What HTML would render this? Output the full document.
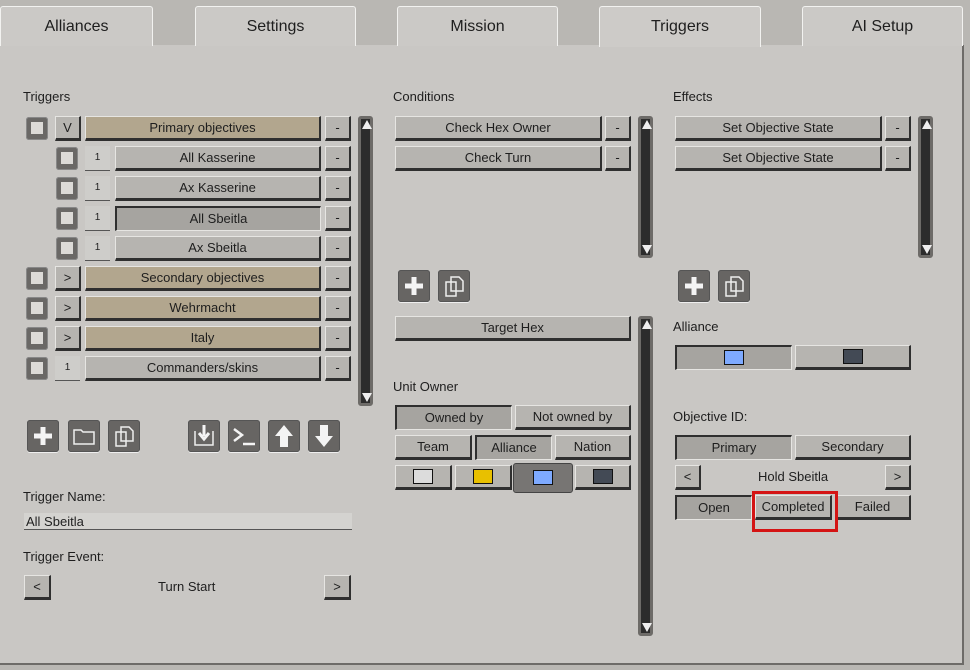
<!DOCTYPE html>
<html><head><meta charset="utf-8"><style>
*{box-sizing:border-box;margin:0;padding:0}
body{width:970px;height:670px;overflow:hidden;background:#b9b7b3;font-family:"Liberation Sans",sans-serif;font-size:13px;color:#222;position:relative}
.a{position:absolute}
.panel{position:absolute;left:0;top:45px;width:964px;height:620px;background:#c9c7c4;border-right:2px solid #6d6b68;border-bottom:2px solid #6d6b68}
.tab{position:absolute;top:6px;height:40px;background:#cbc9c6;border:1px solid #f2f2f0;border-bottom:none;border-radius:3px 3px 0 0;text-align:center;line-height:40px;font-size:16px;color:#1e1e1e}
.tab.on{background:#cdcbc8;height:41px}
.lbl{position:absolute;font-size:13px;color:#1e1e1e}
.b{position:absolute;height:25px;background:#b6b4b0;border-top:1px solid #e6e5e2;border-left:1px solid #e6e5e2;border-right:2px solid #2f2f2f;border-bottom:3px solid #2f2f2f;text-align:center;line-height:21px;font-size:13px;color:#1e1e1e}
.p{background:#a6a4a0;border-top:2px solid #2f2f2f;border-left:2px solid #2f2f2f;border-right:1px solid #e6e5e2;border-bottom:1px solid #e6e5e2;line-height:22px}
.tan{background:#b2a68e}
.one{position:absolute;height:25px;width:25px;background:#cecdca;border-bottom:1px solid #555;text-align:center;line-height:24px;font-size:10px}
.cb{position:absolute;width:22px;height:23px;background:#6a6866;border-radius:3px;box-shadow:inset 0 0 0 1px #888}
.cb::after{content:"";position:absolute;left:5px;top:5px;width:12px;height:12px;background:#dcdad7}
.sb{position:absolute;width:15px;background:#2c2c2c;border:3px solid #6d6b68;border-radius:3px}
.sb::before{content:"";position:absolute;left:1px;top:1px;border-left:5px solid transparent;border-right:5px solid transparent;border-bottom:9px solid #eee}
.sb::after{content:"";position:absolute;left:1px;bottom:1px;border-left:5px solid transparent;border-right:5px solid transparent;border-top:9px solid #eee}
.ic{position:absolute;width:32px;height:32px;background:#676563;border-radius:3px;box-shadow:inset 0 0 0 1px #555,0 1px 0 #eee}
.ic svg{position:absolute;left:0;top:0}
.sw{position:absolute;left:50%;top:50%;width:20px;height:15px;margin:-8px 0 0 -10px;border:1px solid #111}
</style></head><body>
<div class="panel"></div>
<div class="tab" style="left:0;width:153px">Alliances</div>
<div class="tab" style="left:195px;width:161px">Settings</div>
<div class="tab" style="left:397px;width:161px">Mission</div>
<div class="tab on" style="left:599px;width:162px">Triggers</div>
<div class="tab" style="left:802px;width:161px">AI Setup</div>

<div class="lbl" style="left:23px;top:89px">Triggers</div>
<div class="cb" style="left:26px;top:117px"></div><div class="b" style="left:55px;top:116px;width:26px">V</div><div class="b tan" style="left:85px;top:116px;width:236px">Primary objectives</div><div class="b" style="left:325px;top:116px;width:26px">-</div>
<div class="cb" style="left:56px;top:147px"></div><div class="one" style="left:85px;top:146px">1</div><div class="b" style="left:115px;top:146px;width:206px">All Kasserine</div><div class="b" style="left:325px;top:146px;width:26px">-</div>
<div class="cb" style="left:56px;top:177px"></div><div class="one" style="left:85px;top:176px">1</div><div class="b" style="left:115px;top:176px;width:206px">Ax Kasserine</div><div class="b" style="left:325px;top:176px;width:26px">-</div>
<div class="cb" style="left:56px;top:207px"></div><div class="one" style="left:85px;top:206px">1</div><div class="b p" style="left:115px;top:206px;width:206px">All Sbeitla</div><div class="b" style="left:325px;top:206px;width:26px">-</div>
<div class="cb" style="left:56px;top:237px"></div><div class="one" style="left:85px;top:236px">1</div><div class="b" style="left:115px;top:236px;width:206px">Ax Sbeitla</div><div class="b" style="left:325px;top:236px;width:26px">-</div>
<div class="cb" style="left:26px;top:267px"></div><div class="b" style="left:55px;top:266px;width:26px">&gt;</div><div class="b tan" style="left:85px;top:266px;width:236px">Secondary objectives</div><div class="b" style="left:325px;top:266px;width:26px">-</div>
<div class="cb" style="left:26px;top:297px"></div><div class="b" style="left:55px;top:296px;width:26px">&gt;</div><div class="b tan" style="left:85px;top:296px;width:236px">Wehrmacht</div><div class="b" style="left:325px;top:296px;width:26px">-</div>
<div class="cb" style="left:26px;top:327px"></div><div class="b" style="left:55px;top:326px;width:26px">&gt;</div><div class="b tan" style="left:85px;top:326px;width:236px">Italy</div><div class="b" style="left:325px;top:326px;width:26px">-</div>
<div class="cb" style="left:26px;top:357px"></div><div class="one" style="left:55px;top:356px">1</div><div class="b" style="left:85px;top:356px;width:236px">Commanders/skins</div><div class="b" style="left:325px;top:356px;width:26px">-</div>
<div class="sb" style="left:358px;top:116px;height:290px"></div>

<div class="ic" style="left:27px;top:420px"><svg width="32" height="32"><path d="M16 7V25M7 16H25" stroke="#f4f4f4" stroke-width="5"/></svg></div>
<div class="ic" style="left:68px;top:420px"><svg width="32" height="32"><path d="M6 10H13L15 12H26V24H6Z" fill="none" stroke="#eee" stroke-width="1.5"/></svg></div>
<div class="ic" style="left:108px;top:420px"><svg width="32" height="32"><path d="M13 7H21L25 11V21H13Z M8 12H18V26H8Z" fill="none" stroke="#eee" stroke-width="1.5"/></svg></div>
<div class="ic" style="left:188px;top:420px"><svg width="32" height="32"><path d="M7 11V25H25V11" fill="none" stroke="#eee" stroke-width="1.5"/><path d="M16 5V16M11 13L16 19L21 13" fill="none" stroke="#f4f4f4" stroke-width="3"/></svg></div>
<div class="ic" style="left:228px;top:420px"><svg width="32" height="32"><path d="M6 9L14 15L6 21M15 24H27" fill="none" stroke="#f4f4f4" stroke-width="2.5"/></svg></div>
<div class="ic" style="left:268px;top:420px"><svg width="32" height="32"><path d="M16 5L25 16H20V27H12V16H7Z" fill="#f4f4f4"/></svg></div>
<div class="ic" style="left:308px;top:420px"><svg width="32" height="32"><path d="M16 27L25 16H20V5H12V16H7Z" fill="#f4f4f4"/></svg></div>

<div class="lbl" style="left:23px;top:489px">Trigger Name:</div>
<div class="a" style="left:24px;top:513px;width:328px;height:17px;background:#d4d3d0;border-bottom:1px solid #555;padding-left:2px;line-height:17px">All Sbeitla</div>
<div class="lbl" style="left:23px;top:549px">Trigger Event:</div>
<div class="b" style="left:24px;top:575px;width:27px">&lt;</div>
<div class="lbl" style="left:158px;top:579px">Turn Start</div>
<div class="b" style="left:324px;top:575px;width:27px">&gt;</div>

<div class="lbl" style="left:393px;top:89px">Conditions</div>
<div class="b" style="left:395px;top:116px;width:207px">Check Hex Owner</div><div class="b" style="left:605px;top:116px;width:26px">-</div>
<div class="b" style="left:395px;top:146px;width:207px">Check Turn</div><div class="b" style="left:605px;top:146px;width:26px">-</div>
<div class="sb" style="left:638px;top:116px;height:142px"></div>
<div class="ic" style="left:398px;top:270px"><svg width="32" height="32"><path d="M16 7V25M7 16H25" stroke="#f4f4f4" stroke-width="5"/></svg></div>
<div class="ic" style="left:438px;top:270px"><svg width="32" height="32"><path d="M13 7H21L25 11V21H13Z M8 12H18V26H8Z" fill="none" stroke="#eee" stroke-width="1.5"/></svg></div>
<div class="b" style="left:395px;top:316px;width:236px">Target Hex</div>
<div class="sb" style="left:638px;top:316px;height:320px"></div>
<div class="lbl" style="left:393px;top:379px">Unit Owner</div>
<div class="b p" style="left:395px;top:405px;width:117px">Owned by</div><div class="b" style="left:515px;top:405px;width:116px">Not owned by</div>
<div class="b" style="left:395px;top:435px;width:77px">Team</div><div class="b p" style="left:475px;top:435px;width:77px">Alliance</div><div class="b" style="left:555px;top:435px;width:76px">Nation</div>
<div class="b" style="left:395px;top:465px;width:57px"><div class="sw" style="background:#dcdcdc"></div></div>
<div class="b" style="left:455px;top:465px;width:57px"><div class="sw" style="background:#e8c000"></div></div>
<div class="a" style="left:513px;top:463px;width:60px;height:30px;background:#777573;border:1px solid #444;border-radius:3px"><div class="sw" style="background:#7eaaff"></div></div>
<div class="b" style="left:575px;top:465px;width:56px"><div class="sw" style="background:#434a55"></div></div>

<div class="lbl" style="left:673px;top:89px">Effects</div>
<div class="b" style="left:675px;top:116px;width:207px">Set Objective State</div><div class="b" style="left:885px;top:116px;width:26px">-</div>
<div class="b" style="left:675px;top:146px;width:207px">Set Objective State</div><div class="b" style="left:885px;top:146px;width:26px">-</div>
<div class="sb" style="left:918px;top:116px;height:142px"></div>
<div class="ic" style="left:678px;top:270px"><svg width="32" height="32"><path d="M16 7V25M7 16H25" stroke="#f4f4f4" stroke-width="5"/></svg></div>
<div class="ic" style="left:718px;top:270px"><svg width="32" height="32"><path d="M13 7H21L25 11V21H13Z M8 12H18V26H8Z" fill="none" stroke="#eee" stroke-width="1.5"/></svg></div>
<div class="lbl" style="left:673px;top:319px">Alliance</div>
<div class="b p" style="left:675px;top:345px;width:117px"><div class="sw" style="background:#7eaaff"></div></div>
<div class="b" style="left:795px;top:345px;width:116px"><div class="sw" style="background:#434a55"></div></div>
<div class="lbl" style="left:673px;top:409px">Objective ID:</div>
<div class="b p" style="left:675px;top:435px;width:117px">Primary</div><div class="b" style="left:795px;top:435px;width:116px">Secondary</div>
<div class="b" style="left:675px;top:465px;width:26px">&lt;</div>
<div class="lbl" style="left:758px;top:469px">Hold Sbeitla</div>
<div class="b" style="left:885px;top:465px;width:26px">&gt;</div>
<div class="b p" style="left:675px;top:495px;width:77px">Open</div>
<div class="b" style="left:755px;top:495px;width:77px">Completed</div>
<div class="b" style="left:835px;top:495px;width:76px">Failed</div>
<div class="a" style="left:752px;top:491px;width:86px;height:41px;border:3px solid #d41414"></div>
</body></html>
